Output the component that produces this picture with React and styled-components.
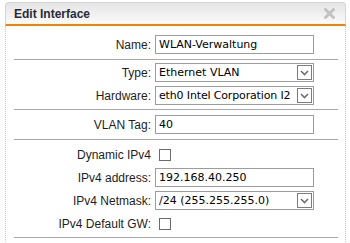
import React from 'react';
import styled, { createGlobalStyle } from 'styled-components';

const GlobalStyle = createGlobalStyle`
  body {
    margin: 0;
    background: #ffffff;
    font-family: "Liberation Sans", Arial, sans-serif;
  }
`;

const Panel = styled.div`
  width: 341px;
  margin: 2px 0 0 5px;
`;

const Header = styled.div`
  height: 21px;
  display: flex;
  align-items: center;
  justify-content: space-between;
  padding: 0 10px 0 8px;
  border: 1px solid #d6d6d6;
  border-bottom: 2px solid #f08400;
  border-radius: 4px 4px 0 0;
  background: linear-gradient(#e4e4e4, #fbfbfb);
`;

const Title = styled.div`
  font-size: 12px;
  font-weight: bold;
  color: #2b2b33;
`;

const Body = styled.div`
  border-left: 1px dotted #c8c8c8;
  border-right: 1px dotted #c8c8c8;
  padding: 4px 7px 8px 8px;
`;

const Group = styled.div`
  display: flex;
  flex-direction: column;
  gap: 4px;
  padding: ${p => p.$top || 5}px 0 ${p => p.$bottom || 5}px;
  border-bottom: 1px solid #a8a8a8;
`;

const Row = styled.div`
  display: flex;
  align-items: center;
  height: 19px;
`;

const Label = styled.div`
  width: 137px;
  flex: none;
  text-align: right;
  font-size: 12px;
  color: #1e1e1e;
`;

const Field = styled.div`
  width: 159px;
  height: 19px;
  margin-left: 4px;
  box-sizing: border-box;
  border: 1px solid #9c9c9c;
  background: #fff;
  display: flex;
  align-items: center;
  padding-left: 3px;
  font-family: "DejaVu Sans", Verdana, sans-serif;
  font-size: 11px;
  color: #000;
  overflow: hidden;
`;

const Value = styled.span`
  flex: 1;
  min-width: 0;
  white-space: nowrap;
  overflow: hidden;
  letter-spacing: ${p => p.$tight ? '-0.15px' : 'normal'};
`;

const ArrowBtn = styled.div`
  flex: none;
  width: 15px;
  height: 15px;
  margin-right: 1px;
  box-sizing: border-box;
  border: 1px solid #7c7c7c;
  background: #fff;
  display: flex;
  align-items: center;
  justify-content: center;
`;

const Check = styled.div`
  width: 12px;
  height: 12px;
  margin-left: 8px;
  box-sizing: border-box;
  border: 1px solid #6a6a6a;
  background: #fff;
`;

const CloseIcon = () => (
  <svg width="11" height="11" viewBox="0 0 11 11">
    <path d="M1.5 1.5 L9.5 9.5 M9.5 1.5 L1.5 9.5" stroke="#c2c2c2" strokeWidth="3" strokeLinecap="round" />
  </svg>
);

const Chevron = () => (
  <svg width="9" height="6" viewBox="0 0 9 6">
    <path d="M1 1 L4.5 4.5 L8 1" stroke="#6e6e6e" strokeWidth="1.6" fill="none" />
  </svg>
);

const Select = ({ value, tight }) => (
  <Field>
    <Value $tight={tight}>{value}</Value>
    <ArrowBtn><Chevron /></ArrowBtn>
  </Field>
);

const App = () => (
  <>
    <GlobalStyle />
    <Panel>
      <Header>
        <Title>Edit Interface</Title>
        <CloseIcon />
      </Header>
      <Body>
        <Group $bottom={5}>
          <Row>
            <Label>Name:</Label>
            <Field>WLAN-Verwaltung</Field>
          </Row>
        </Group>
        <Group $top={3} $bottom={4}>
          <Row>
            <Label>Type:</Label>
            <Select value="Ethernet VLAN" />
          </Row>
          <Row>
            <Label>Hardware:</Label>
            <Select value="eth0 Intel Corporation I2" tight />
          </Row>
        </Group>
        <Group $top={5} $bottom={5}>
          <Row>
            <Label>VLAN Tag:</Label>
            <Field>40</Field>
          </Row>
        </Group>
        <Group $top={5} $bottom={4}>
          <Row>
            <Label>Dynamic IPv4</Label>
            <Check />
          </Row>
          <Row>
            <Label>IPv4 address:</Label>
            <Field>192.168.40.250</Field>
          </Row>
          <Row>
            <Label>IPv4 Netmask:</Label>
            <Select value="/24 (255.255.255.0)" />
          </Row>
          <Row>
            <Label>IPv4 Default GW:</Label>
            <Check />
          </Row>
        </Group>
      </Body>
    </Panel>
  </>
);

export default App;
